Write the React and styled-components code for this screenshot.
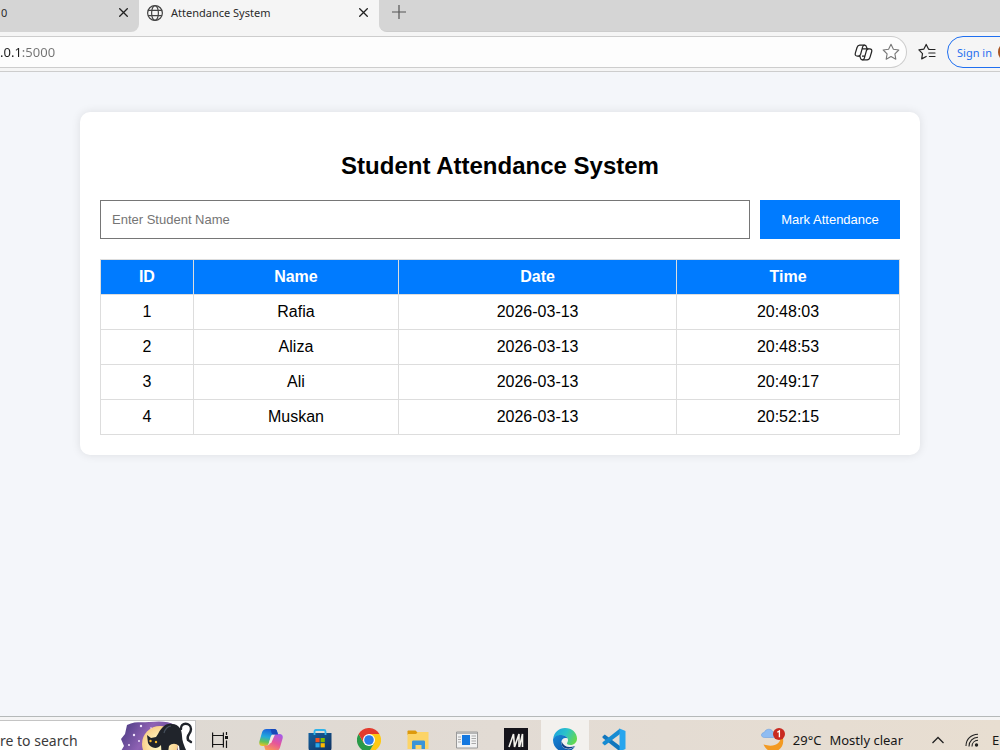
import React, { useState } from "react";
import styled, { createGlobalStyle } from "styled-components";

const colorChrome = "#f5f5f5";
const colorTabStrip = "#d5d5d5";
const colorLine = "#cdcdcd";
const colorPage = "#f4f6fa";
const colorPrimary = "#007bff";
const colorCellBorder = "#dddddd";
const fontUi = `"Noto Sans", "Open Sans", sans-serif`;
const fontPage = `"Liberation Sans", Arial, sans-serif`;

const GlobalStyle = createGlobalStyle`
    * {
        box-sizing: border-box;
    }

    body {
        margin: 0;
        font-family: ${fontPage};
        background: ${colorPage};
    }

    button {
        border: none;
        padding: 0;
        background: none;
        cursor: pointer;
    }

    svg {
        display: block;
        flex-shrink: 0;
    }
`;

const Screen = styled.div`
    display: flex;
    flex-direction: column;
    height: 100vh;
    overflow: hidden;
`;

/* Browser */
const TabStrip = styled.div`
    display: flex;
    flex: 0 0 32px;
    background: ${colorChrome};
    font-family: ${fontUi};
    font-size: 11px;
    color: #2b2b2b;
`;

const Tab = styled.div`
    display: flex;
    justify-content: space-between;
    flex: 0 0 ${({ $width }) => $width}px;
    height: 32px;
    padding: 0 8px 7px ${({ $active }) => ($active ? 8 : 1)}px;
    background: ${({ $active }) => ($active ? colorChrome : colorTabStrip)};
    border-radius: 0 0 ${({ $active }) => ($active ? 0 : 8)}px 0;
`;

const TabTitle = styled.button`
    display: flex;
    align-items: center;
    gap: 8px;
    font: inherit;
    color: inherit;
`;

const CloseButton = styled.button`
    display: flex;
    align-items: center;
    justify-content: center;
    width: 16px;
`;

const StripRest = styled.div`
    flex: 1;
    padding-left: 12px;
    background: ${colorTabStrip};
    border-bottom: 1px solid ${colorLine};
    border-radius: 0 0 0 8px;
`;

const NewTabButton = styled.button`
    && {
        padding: 4px 0;
    }
    display: flex;
`;

const Toolbar = styled.div`
    display: flex;
    align-items: flex-start;
    flex: 0 0 40px;
    padding-top: 4px;
    background: ${colorChrome};
    border-bottom: 1px solid ${colorLine};
    font-family: ${fontUi};
    overflow: hidden;
`;

const AddressBar = styled.div`
    display: flex;
    align-items: center;
    flex: 1;
    gap: 8px;
    height: 32px;
    padding-right: 5px;
    background: #fdfdfd;
    border: 1px solid ${colorLine};
    border-left: none;
    border-radius: 0 16px 16px 0;
`;

/* host in dark, port in grey */
const AddressInput = styled.input`
    flex: 1;
    min-width: 0;
    height: 28px;
    padding: 0;
    border: none;
    outline: none;
    font-family: ${fontUi};
    font-size: 13px;
    color: transparent;
    background: linear-gradient(90deg, #1c1c1c 22px, #727272 22px);
    background-clip: text;
`;

const ToolButton = styled.button`
    display: flex;
    align-items: center;
    justify-content: center;
    width: 20px;
    height: 32px;
`;

const FavoritesButton = styled(ToolButton)`
    width: 40px;
`;

const SignInButton = styled.button`
    && {
        padding-left: 9px;
        border: 1px solid #1f6ff0;
    }
    display: flex;
    align-items: center;
    flex: 0 0 80px;
    gap: 6px;
    height: 32px;
    margin-right: -27px;
    border-radius: 16px;
    font-family: ${fontUi};
    font-size: 11px;
    color: #1f6ff0;
    white-space: nowrap;
`;

const Avatar = styled.span`
    flex-shrink: 0;
    width: 20px;
    height: 20px;
    border-radius: 50%;
    background: #a8531f;
`;

/* Page */
const Page = styled.main`
    flex: 1;
    min-height: 0;
    padding: 40px;
    background: ${colorPage};
`;

const Card = styled.section`
    max-width: 840px;
    margin: 0 auto;
    padding: 20px;
    background: #ffffff;
    border-radius: 10px;
    box-shadow: 0 0 10px rgba(0, 0, 0, 0.1);
`;

const Heading = styled.h2`
    margin: 20px 0;
    font-size: 24px;
    line-height: 28px;
    text-align: center;
    color: #000000;
`;

const Form = styled.form`
    display: flex;
    gap: 10px;
    margin-bottom: 20px;
`;

const NameInput = styled.input`
    flex: 1;
    min-width: 0;
    height: 39px;
    padding: 10px 11px;
    border: 1px solid #767676;
    border-radius: 0;
    font-family: ${fontPage};
    font-size: 13px;

    &::placeholder {
        color: #757575;
    }
`;

const SubmitButton = styled.button`
    && {
        background: ${colorPrimary};
    }
    flex: 0 0 140px;
    font-family: ${fontPage};
    font-size: 13px;
    color: #ffffff;
`;

const Table = styled.table`
    width: 100%;
    border-collapse: collapse;
    font-size: 16px;
    line-height: 18px;
    color: #000000;
`;

const HeadCell = styled.th`
    padding: 8px;
    border: 1px solid ${colorCellBorder};
    background: ${colorPrimary};
    color: #ffffff;
`;

const Cell = styled.td`
    padding: 8px;
    border: 1px solid ${colorCellBorder};
    text-align: center;
`;

const WindowEdge = styled.div`
    flex: 0 0 4px;
    background: ${colorChrome};
    border-top: 1px solid #b5b9b9;
`;

/* Taskbar */
const Taskbar = styled.footer`
    display: flex;
    align-items: flex-start;
    flex: 0 0 30px;
    overflow: hidden;
    background: linear-gradient(90deg, #dcd8d2, #e2dbd4 50%, #e8ded1);
    font-family: ${fontUi};
    font-size: 14px;
    color: #161616;
`;

const SearchBox = styled.label`
    display: flex;
    align-items: center;
    flex: 0 0 196px;
    min-width: 0;
    height: 40px;
    background: #ffffff;
    border: 1px solid #c4c4c4;
    border-left: none;
`;

const SearchInput = styled.input`
    flex: 1;
    width: 0;
    min-width: 0;
    padding: 0;
    border: none;
    outline: none;
    font-family: ${fontUi};
    font-size: 14px;

    &::placeholder {
        color: #3b3b3b;
    }
`;

const AppList = styled.nav`
    display: flex;
    gap: 1px;
    margin-left: 3px;
`;

const AppButton = styled.button`
    && {
        background: ${({ $open }) => ($open ? "#f3f1ee" : "none")};
    }
    display: flex;
    align-items: center;
    justify-content: center;
    width: 48px;
    height: 40px;
`;

const Tray = styled.div`
    display: flex;
    align-items: center;
    height: 40px;
    margin-left: auto;
`;

const Weather = styled.button`
    display: flex;
    align-items: center;
    gap: 8px;
    height: 40px;
    font-family: ${fontUi};
    font-size: 13px;
    color: inherit;
    white-space: nowrap;
`;

const TrayButton = styled.button`
    display: flex;
    align-items: center;
    justify-content: center;
    width: 34px;
    height: 40px;
`;

const ChevronButton = styled(TrayButton)`
    margin-left: 18px;
`;

const Language = styled.span`
    width: 8px;
    margin-left: 3px;
    font-size: 13px;
`;

function CloseIcon() {
    return (
        <svg width="9" height="9" viewBox="0 0 9 9" stroke="#222" strokeWidth="1.3">
            <path d="M0.3 0.3L8.7 8.7M8.7 0.3L0.3 8.7" />
        </svg>
    );
}

function GlobeIcon() {
    return (
        <svg width="16" height="16" viewBox="0 0 16 16" fill="none" stroke="#444" strokeWidth="1.2">
            <circle cx="8" cy="8" r="7.4" />
            <ellipse cx="8" cy="8" rx="3.4" ry="7.4" />
            <path d="M1.1 5.3H14.9M1.1 10.7H14.9" />
        </svg>
    );
}

function CopilotOutline() {
    return (
        <svg width="19" height="19" viewBox="0 0 20 20" fill="none" stroke="#242424" strokeWidth="1.3" strokeLinejoin="round">
            <path d="M6 2.2H11.1C12.3 2.2 12.8 3 13.1 4L13.8 6.1H16.4C18.4 6.1 19.1 7.4 18.6 9.2L16.8 15.2C16.3 16.9 15.5 17.8 13.8 17.8H8.9C7.7 17.8 7.1 17 6.8 15.9L6.2 13.8H3.6C1.6 13.8 0.9 12.5 1.4 10.7L3.2 4.7C3.7 3 4.4 2.2 6 2.2Z" />
            <path d="M11.2 2.2C9.9 2.2 9.4 3.1 9.1 4.1L7 11.8C6.6 13.1 6.1 13.8 4.8 13.8M8.8 17.8C10.1 17.8 10.6 16.9 10.9 15.9L13 8.2C13.4 6.9 13.9 6.1 15.2 6.1M8.4 13.8H11.5M8.6 6.1H13.8" />
        </svg>
    );
}

function StarIcon() {
    return (
        <svg width="18" height="18" viewBox="0 0 18 18" fill="none" stroke="#777" strokeWidth="1.1" strokeLinejoin="round">
            <path d="M9 1.3L11.4 6.2L16.8 7L12.9 10.8L13.8 16.2L9 13.6L4.2 16.2L5.1 10.8L1.2 7L6.6 6.2Z" />
        </svg>
    );
}

function FavoritesIcon() {
    return (
        <svg width="18" height="18" viewBox="0 0 18 18" fill="none" stroke="#242424" strokeWidth="1.2" strokeLinejoin="round" strokeLinecap="round">
            <path d="M11.4 6.4L10.6 6.2L8.2 1.4L5.9 6.1L0.9 6.9L4.5 10.6L3.7 15.9L8.2 13.5" />
            <path d="M11.4 6.5H17M10.8 10H17M11.4 13.5H17" />
        </svg>
    );
}

function CatArt() {
    return (
        <svg width="74" height="38" viewBox="0 0 74 38">
            <defs>
                <linearGradient id="night" x1="0" y1="0" x2="1" y2="0.4">
                    <stop offset="0" stopColor="#45387f" />
                    <stop offset="0.5" stopColor="#8f62b4" />
                    <stop offset="1" stopColor="#5b4590" />
                </linearGradient>
                <radialGradient id="moon">
                    <stop offset="0.3" stopColor="#fff3bd" />
                    <stop offset="1" stopColor="#f9d08c" />
                </radialGradient>
            </defs>
            <path d="M6 4C14 0 20 2 28 1C38 0 48 0 54 4L58 38H3L0 30L3 25L0 18L4 13Z" fill="url(#night)" />
            <circle cx="39" cy="23" r="18" fill="url(#moon)" />
            <g fill="#f4e6ff">
                <circle cx="20" cy="5" r="1.2" />
                <circle cx="13" cy="14" r="1.2" />
                <circle cx="18" cy="20" r="1" />
                <circle cx="8" cy="24" r="1" />
                <circle cx="30" cy="7" r="0.8" />
            </g>
            <path d="M26 14L30 17L35 16L37 13C41 5 46 2 51 3C58 3 61 9 61 15C61 20 63 24 65 29L65 38H60L58 25C55 22 51 22 48 25L46 38H41L40 24C36 29 29 27 27 22Z" fill="#20242b" />
            <path d="M60 8C59 1 70 1 70 8C70 14 65 13 67 19L70 21" fill="none" stroke="#20242b" strokeWidth="2.4" strokeLinecap="round" />
            <path d="M43 12C44 8 47 5 50 5" fill="none" stroke="#46505c" strokeWidth="1.2" />
            <circle cx="29.5" cy="20" r="1.2" fill="#f7b928" />
            <circle cx="35" cy="21" r="1.2" fill="#f7b928" />
        </svg>
    );
}

function TaskViewIcon() {
    return (
        <svg width="18" height="16" viewBox="0 0 18 16" fill="none" stroke="#161616" strokeWidth="1.2">
            <path d="M1.6 0.500V3.5H12.4V0.500M1.6 15.500V12.5H12.4V15.500M1.6 3.5V12.5M12.4 3.5V12.5M15.5 0V3M15.5 8.5V16" />
            <path d="M14 4H17V7H14Z" fill="#161616" stroke="none" />
        </svg>
    );
}

function CopilotIcon() {
    return (
        <svg width="24" height="24" viewBox="0 0 24 24">
            <defs>
                <linearGradient id="copA" x1="0.4" y1="0" x2="0.2" y2="1">
                    <stop offset="0" stopColor="#1b63db" />
                    <stop offset="0.45" stopColor="#22a9dc" />
                    <stop offset="0.75" stopColor="#62c25a" />
                    <stop offset="1" stopColor="#f3c520" />
                </linearGradient>
                <linearGradient id="copB" x1="0.8" y1="0" x2="0.3" y2="1">
                    <stop offset="0" stopColor="#a55be8" />
                    <stop offset="0.5" stopColor="#e6559a" />
                    <stop offset="1" stopColor="#fb9b54" />
                </linearGradient>
            </defs>
            <path d="M7.5 1H15.5C17 1 17.7 2 18.2 3.7L19 6.5H14C12.5 6.5 12 8 11.6 9.3L9.6 15.5C9 17.2 8 18 6.5 18H3.3C0.8 18 -0.2 16 0.4 13.6L3 4.5C3.7 2.2 5 1 7.5 1Z" fill="url(#copA)" />
            <path d="M16.5 23H8.5C7 23 6.3 22 5.8 20.3L5 17.5H8C9.5 17.5 11 16 11.4 14.7L14.4 8.5C15 6.8 16 6 17.5 6H20.7C23.2 6 24.2 8 23.6 10.4L21 19.5C20.3 21.8 19 23 16.5 23Z" fill="url(#copB)" />
            <path d="M11.5 10C12 8 12.8 6.8 14.5 6.8L16 6.4L12.2 15L9.8 15.5Z" fill="#f1e9e4" />
            <path d="M11 1H15.5C17 1 17.7 2 18.2 3.7L19 6.5H14.5C11.5 6.5 13 2 11 1Z" fill="#1848b8" />
        </svg>
    );
}

function StoreIcon() {
    return (
        <svg width="24" height="24" viewBox="0 0 24 24">
            <defs>
                <linearGradient id="bag" x1="0" y1="0" x2="1" y2="1">
                    <stop offset="0" stopColor="#12609f" />
                    <stop offset="1" stopColor="#12315f" />
                </linearGradient>
            </defs>
            <path d="M0.5 5H23.5V20C23.5 22 22.5 23 20.5 23H3.5C1.5 23 0.5 22 0.5 20Z" fill="url(#bag)" />
            <path d="M6.5 7V3.5C6.5 2.4 7 2 8 2H16C17 2 17.5 2.4 17.5 3.5V7" fill="none" stroke="#2fb3ea" strokeWidth="1.8" />
            <path d="M7.5 10H11.6V14.2H7.5Z" fill="#f25022" />
            <path d="M12.6 10H16.8V14.2H12.6Z" fill="#7fba00" />
            <path d="M7.5 15.2H11.6V19.4H7.5Z" fill="#28a8ea" />
            <path d="M12.6 15.2H16.8V19.4H12.6Z" fill="#ffb900" />
        </svg>
    );
}

function ChromeIcon() {
    return (
        <svg width="24" height="24" viewBox="0 0 24 24">
            <path d="M12 6H22.4A12 12 0 0 1 12 24L17.2 15Z" fill="#fdc914" />
            <path d="M1.6 6L6.8 15H17.2L12 24A12 12 0 0 1 1.6 6Z" fill="#2a9a48" />
            <path d="M1.6 6A12 12 0 0 1 22.4 6H12L6.8 15Z" fill="#e33b2e" />
            <circle cx="12" cy="12" r="6" fill="#fff" />
            <circle cx="12" cy="12" r="4.8" fill="#2b7de9" />
        </svg>
    );
}

function FolderIcon() {
    return (
        <svg width="22" height="20" viewBox="0 0 22 20">
            <path d="M0.5 1.5C0.5 0.7 1 0.5 1.5 0.5H8.5L10.5 2.5V5H0.5Z" fill="#dd9a0c" />
            <path d="M0.5 4H9L11 2H21.5V19H0.5Z" fill="#fcd467" />
            <path d="M5 19V12C5 11 5.5 10.5 6.5 10.5H16.5C17.5 10.5 18 11 18 12V19H14.5V15H8.5V19Z" fill="#3a94d8" />
        </svg>
    );
}

function ReaderIcon() {
    return (
        <svg width="22" height="18" viewBox="0 0 22 18">
            <path d="M0.5 1H21.5V17H0.5Z" fill="#f2f2f2" stroke="#9a9a9a" />
            <path d="M1 2H21" stroke="#b5b5b5" strokeWidth="2" />
            <path d="M6 4H14V14H6Z" fill="#1478e0" />
            <path d="M2 6H5M2 8.5H5M2 11H5M15.5 5H20M15.5 7.5H20M15.5 10H20M15.5 12.5H20" stroke="#a9a9a9" />
        </svg>
    );
}

function MediaIcon() {
    return (
        <svg width="24" height="24" viewBox="0 0 24 24" fill="none">
            <path d="M0 0H24V24H0Z" fill="#15141b" />
            <path d="M5 19L9.5 6L10.5 19L15 6V19" stroke="#f5f3ee" strokeWidth="1.6" />
            <path d="M15.5 19L18.5 6V19" stroke="#f5f3ee" strokeWidth="1.6" />
        </svg>
    );
}

function EdgeIcon() {
    return (
        <svg width="24" height="24" viewBox="0 0 24 24">
            <defs>
                <linearGradient id="edgeTop" x1="0" y1="0.2" x2="1" y2="0.6">
                    <stop offset="0" stopColor="#1ba3e0" />
                    <stop offset="0.5" stopColor="#2cc3c8" />
                    <stop offset="1" stopColor="#66d94c" />
                </linearGradient>
                <linearGradient id="edgeLow" x1="0" y1="0" x2="1" y2="1">
                    <stop offset="0" stopColor="#1688d8" />
                    <stop offset="1" stopColor="#0f4da0" />
                </linearGradient>
            </defs>
            <path d="M0.2 11C1 4 6 0 12 0C19 0 24 4.8 24 10.5C24 14.5 21 17 17.5 17C14.5 17 13.3 15.8 14.3 14.5C16.5 11 13.5 7.5 9.5 7.5C5 7.5 1 9 0.2 11Z" fill="url(#edgeTop)" />
            <path d="M0 12C0 9 4 6.8 8.5 7C12 7.2 14 9 14.5 10.5C11 9 8 11.5 8.3 15C8.7 19.5 13 22 17 21C19 20.5 21 19.3 22.3 18C20 22 16.2 24 12 24C5 24 0 18.5 0 12Z" fill="url(#edgeLow)" />
            <path d="M8.6 13.5C7.5 20 15 23.5 22.3 18C15 20.5 10.5 18.5 8.6 13.5Z" fill="#103d83" />
        </svg>
    );
}

function CodeIcon() {
    return (
        <svg width="24" height="24" viewBox="0 0 24 24">
            <path d="M0.5 8.4L2.8 6.5L18 18V23.5L0.5 9.8Z" fill="#1176bd" />
            <path d="M0.5 15.6L2.8 17.5L18 6V0.5L0.5 14.2Z" fill="#168bd2" />
            <path d="M17.5 0.5L23.5 3V21L17.5 23.5Z" fill="#27a5ee" />
        </svg>
    );
}

function WeatherIcon() {
    return (
        <svg width="24" height="24" viewBox="0 0 24 24">
            <path d="M19.5 7C21 15 14 20 2.5 16.5C5 22 9 24 13 23.5C20 23 24 15.5 21.5 9Z" fill="#f39a22" />
            <path d="M3.5 9.5C-0.5 9.5 -0.5 4.8 3.3 4.5C4.5 0.5 10.5 0 12 4C16 4 16.5 9.5 12.5 9.5Z" fill="#8fbcf2" stroke="#6c9fe2" strokeWidth="0.6" />
            <circle cx="18" cy="6" r="6" fill="#c92a21" />
            <path d="M16.3 4.3L18.4 3V9.2" stroke="#fff" strokeWidth="1.3" fill="none" />
        </svg>
    );
}

function WifiIcon() {
    return (
        <svg width="14" height="14" viewBox="0 0 14 14" fill="none" stroke="#222" strokeWidth="1.1">
            <path d="M1 13C1 6 6 1.5 13 1.2M4 13.5C4 8 8 4.5 13 4.3M7 13.5C7 10 9.5 7.5 13 7.3" />
            <circle cx="11.5" cy="12" r="1.7" fill="#222" stroke="none" />
        </svg>
    );
}

const APPS = [
    { title: "Copilot", icon: <CopilotIcon /> },
    { title: "Microsoft Store", icon: <StoreIcon /> },
    { title: "Google Chrome", icon: <ChromeIcon /> },
    { title: "File Explorer", icon: <FolderIcon /> },
    { title: "Reader", icon: <ReaderIcon /> },
    { title: "Media", icon: <MediaIcon /> },
    { title: "Microsoft Edge", icon: <EdgeIcon />, open: true },
    { title: "Visual Studio Code", icon: <CodeIcon /> }
];

const COLUMNS = ["ID", "Name", "Date", "Time"];

const RECORDS = [
    { id: 1, name: "Rafia", date: "2026-03-13", time: "20:48:03" },
    { id: 2, name: "Aliza", date: "2026-03-13", time: "20:48:53" },
    { id: 3, name: "Ali", date: "2026-03-13", time: "20:49:17" },
    { id: 4, name: "Muskan", date: "2026-03-13", time: "20:52:15" }
];

function Browser() {
    return (
        <>
            <TabStrip>
                <Tab $width={139}>
                    <TabTitle>0</TabTitle>
                    <CloseButton aria-label="Close tab"><CloseIcon /></CloseButton>
                </Tab>
                <Tab $width={240} $active>
                    <TabTitle>
                        <GlobeIcon />
                        Attendance System
                    </TabTitle>
                    <CloseButton aria-label="Close tab"><CloseIcon /></CloseButton>
                </Tab>
                <StripRest>
                    <NewTabButton aria-label="New tab">
                        <svg width="16" height="16" viewBox="0 0 16 16" stroke="#555" strokeWidth="1.2">
                            <path d="M8 1V15M1 8H15" />
                        </svg>
                    </NewTabButton>
                </StripRest>
            </TabStrip>
            <Toolbar>
                <AddressBar>
                    <AddressInput aria-label="Address" defaultValue=".0.1:5000" />
                    <ToolButton aria-label="Copilot"><CopilotOutline /></ToolButton>
                    <ToolButton aria-label="Add to favorites"><StarIcon /></ToolButton>
                </AddressBar>
                <FavoritesButton aria-label="Favorites"><FavoritesIcon /></FavoritesButton>
                <SignInButton>
                    Sign in
                    <Avatar />
                </SignInButton>
            </Toolbar>
        </>
    );
}

function Attendance() {
    const [name, setName] = useState("");

    return (
        <Page>
            <Card>
                <Heading>Student Attendance System</Heading>
                <Form onSubmit={(e) => e.preventDefault()}>
                    <NameInput
                        aria-label="Student name"
                        placeholder="Enter Student Name"
                        value={name}
                        onChange={(e) => setName(e.target.value)}
                    />
                    <SubmitButton type="submit">Mark Attendance</SubmitButton>
                </Form>
                <Table>
                    <thead>
                        <tr>
                            {COLUMNS.map((column) => (
                                <HeadCell key={column}>{column}</HeadCell>
                            ))}
                        </tr>
                    </thead>
                    <tbody>
                        {RECORDS.map((record) => (
                            <tr key={record.id}>
                                <Cell>{record.id}</Cell>
                                <Cell>{record.name}</Cell>
                                <Cell>{record.date}</Cell>
                                <Cell>{record.time}</Cell>
                            </tr>
                        ))}
                    </tbody>
                </Table>
            </Card>
        </Page>
    );
}

function DesktopTaskbar() {
    return (
        <Taskbar>
            <SearchBox>
                <SearchInput aria-label="Search" placeholder="re to search" />
                <CatArt />
            </SearchBox>
            <AppButton aria-label="Task view"><TaskViewIcon /></AppButton>
            <AppList>
                {APPS.map((app) => (
                    <AppButton key={app.title} aria-label={app.title} $open={app.open}>
                        {app.icon}
                    </AppButton>
                ))}
            </AppList>
            <Tray>
                <Weather>
                    <WeatherIcon />
                    <span>29°C</span>
                    <span>Mostly clear</span>
                </Weather>
                <ChevronButton aria-label="Show hidden icons">
                    <svg width="12" height="8" viewBox="0 0 12 8" fill="none" stroke="#222" strokeWidth="1.3">
                        <path d="M0.5 7L6 1.5L11.5 7" />
                    </svg>
                </ChevronButton>
                <TrayButton aria-label="Network"><WifiIcon /></TrayButton>
                <Language>E</Language>
            </Tray>
        </Taskbar>
    );
}

function App() {
    return (
        <Screen>
            <GlobalStyle />
            <Browser />
            <Attendance />
            <WindowEdge />
            <DesktopTaskbar />
        </Screen>
    );
}

export default App;
